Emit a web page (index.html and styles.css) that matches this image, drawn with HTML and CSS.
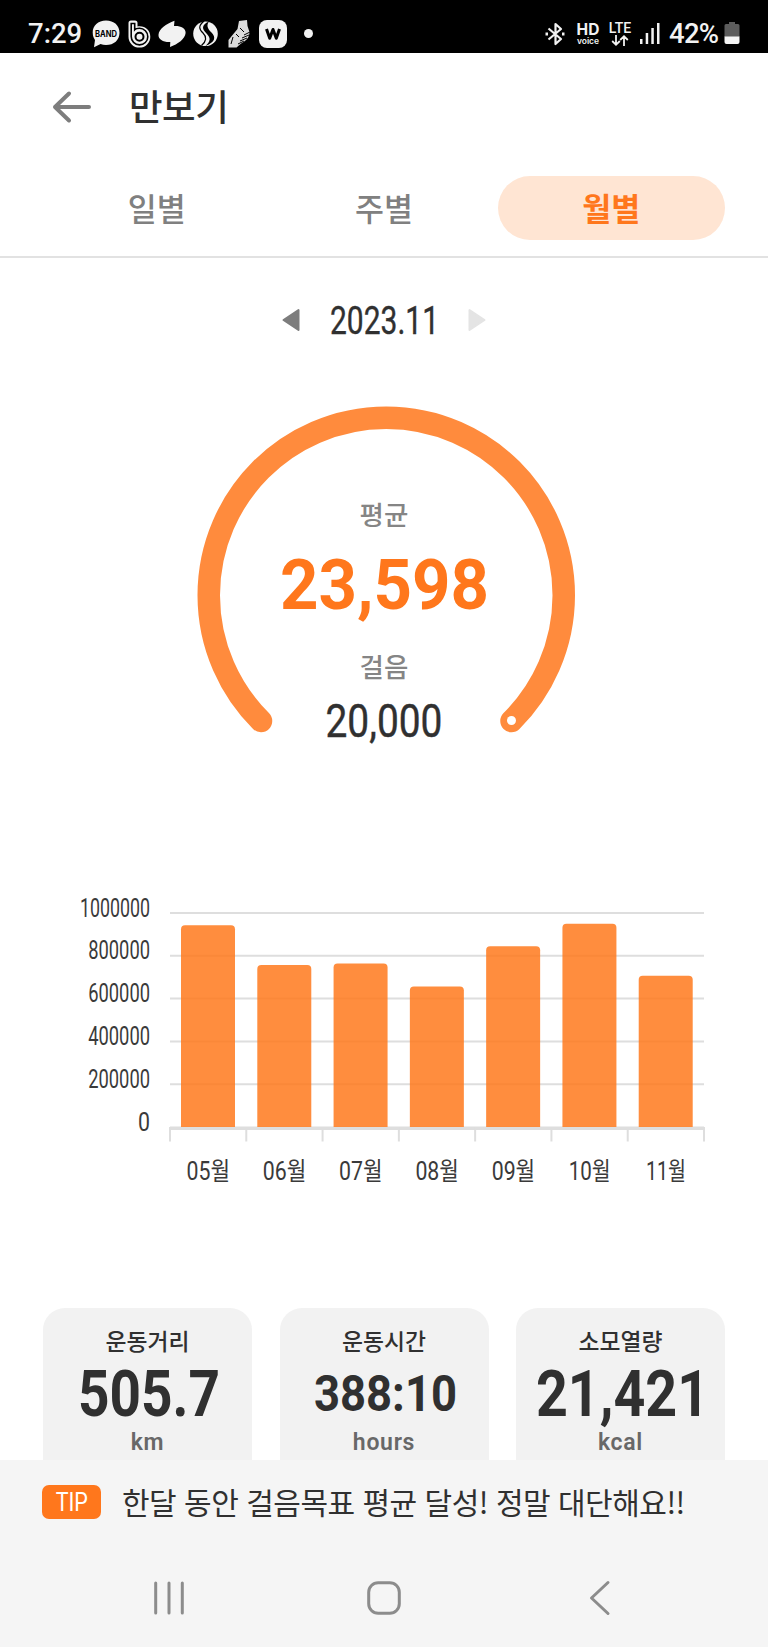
FILE: index.html
```html
<!DOCTYPE html>
<html lang="ko">

<head>
    <meta charset="UTF-8">
    <meta name="viewport" content="width=device-width, initial-scale=1.0">
    <title>만보기</title>
    <link rel="stylesheet" href="styles.css">
</head>

<body>

    <div class="status-bar">
        <div class="status-left">
            <span class="clock">7:29</span>
            <svg width="28" height="28" viewBox="0 0 28 28">
                <path d="M14 0.5C6 .5.7 5.500.7 12.500c0 4 1.500 6 2.300 7.500L2 27.300l6.500-3.300c1.800.700 3.500 1 5.500 1 8 0 13.500-5 13.500-12.300S22 .5 14 .5z" fill="#f2f2f2" />
                <text class="band-text" x="3" y="16.500" textLength="22" lengthAdjust="spacingAndGlyphs">BAND</text>
            </svg>
            <svg class="icon-b" width="23" height="28" viewBox="0 0 23 28" fill="none" stroke="#000" stroke-width="1.600">
                <path d="M.5 16.500V3A2.500 2.500 0 0 1 3 .5h4A2.500 2.500 0 0 1 9.500 3v3.500C17 5.500 22.300 10 22.300 16.700a10.900 10.900 0 0 1-21.800 0z" fill="#f2f2f2" stroke="none" />
                <path d="M3.200 3.500V16.500a8.300 8.300 0 1 0 8.300-8.200c-2 0-4 .4-4.800 1.300V3.500z" />
                <circle cx="11.500" cy="16.700" r="4" stroke-width="2" />
            </svg>
            <svg class="icon-leaf" width="28" height="28" viewBox="0 0 28 28">
                <path d="M16.500 .7L16 6C22 5.500 28 8 27.600 13 27 19 20 24 12 27L12.300 22C6 22.500 0 19.500.5 14.700 1 8.500 8 4 16.500 .7z" fill="#f2f2f2" />
            </svg>
            <svg class="icon-s" width="25" height="28" viewBox="0 0 25 28">
                <circle cx="12.500" cy="13.700" r="12.300" fill="#f2f2f2" />
                <path d="M16 1.500C8 5 9 9 13.500 13.500s4 8-1 12.500c10-4 10.500-9 6-13.500S13.500 5 16 1.500z" fill="#000" />
                <path d="M11 1c-6 5-5 8-1 12s3.500 8-1.500 12.500" fill="none" stroke="#000" stroke-width="1.200" />
            </svg>
            <svg class="icon-shoe" width="22" height="28" viewBox="0 0 22 28">
                <path d="M11 1l8-1 .5 6 2 6c0 6-4 9-9 12l-4 3.500H.5V20l4-5 5-6z" fill="#dcdcdc" />
                <path d="M12 8l4 4M8 14l3 3M5 17l-2 7M14 18l7-3M12 21l7-3M16 15l6-3M10 24l6-3" fill="none" stroke="#000" stroke-width="1" />
            </svg>
            <svg class="icon-w" width="28" height="28" viewBox="0 0 28 28">
                <rect width="28" height="28" rx="8" fill="#f2f2f2" />
                <path d="M7.500 9l3.200 9.300L14 9.500l3.300 8.800L20.500 9" fill="none" stroke="#000" stroke-width="3" stroke-linejoin="round" />
            </svg>
            <span class="dot"></span>
        </div>
        <div class="status-right">
            <svg width="20" height="24" viewBox="0 0 20 24" fill="none" stroke="#f2f2f2" stroke-width="2.200">
                <path d="M3.500 6.500L16 17l-5.500 5v-20L16 7 3.500 17.500" stroke-linejoin="round" />
                <path d="M.5 12h2.500M17 12h2.500" stroke-width="3.200" />
            </svg>
            <div class="hd"><span class="hd-top">HD</span><span class="hd-voice">voice</span></div>
            <div class="lte">
                <span>LTE</span>
                <svg width="18" height="11" viewBox="0 0 18 11" fill="none" stroke="#f2f2f2" stroke-width="1.800">
                    <path d="M5 0v9.500M1.200 6L5 9.800 8.800 6M13 11V1.500M9.200 5L13 1.200 16.800 5" />
                </svg>
            </div>
            <svg class="signal" width="20" height="22" viewBox="0 0 20 22" fill="#f2f2f2">
                <rect x="0" y="16" width="2.500" height="5" />
                <rect x="5.700" y="10" width="2.500" height="11" />
                <rect x="11.300" y="5" width="2.500" height="16" />
                <rect x="17" y="0" width="2.500" height="21" />
            </svg>
            <span class="percent">42%</span>
            <svg class="battery" width="16" height="23" viewBox="0 0 16 23">
                <path d="M5 0h6v2h3a1.500 1.500 0 0 1 1.500 1.500V15H.5V3.500A1.500 1.500 0 0 1 2 2h3z" fill="#5c5c5c" />
                <path d="M.5 14.500h15V20a2 2 0 0 1-2 2h-11a2 2 0 0 1-2-2z" fill="#f5f5f5" />
            </svg>
        </div>
    </div>

    <header class="header">
        <svg width="40" height="32" viewBox="0 0 40 32" fill="none" stroke="#7d7d7d" stroke-width="4" stroke-linecap="round" stroke-linejoin="round">
            <path d="M17 2.500L3 16l14 13.500M3 16h34" />
        </svg>
        <h1>만보기</h1>
    </header>

    <nav class="tabs">
        <a class="tab">일별</a>
        <a class="tab">주별</a>
        <a class="tab active">월별</a>
    </nav>

    <main>
        <div class="month">
            <svg width="18" height="24" viewBox="0 0 18 24"><path d="M16.500 2v20L1.500 12z" fill="#7d7d7d" stroke="#7d7d7d" stroke-width="2" stroke-linejoin="round" /></svg>
            <svg width="108" height="52"><text class="month-text" x="0" y="40" textLength="109" lengthAdjust="spacingAndGlyphs">2023.11</text></svg>
            <svg width="18" height="24" viewBox="0 0 18 24"><path d="M1.500 2v20l15-10z" fill="#e4e4e4" stroke="#e4e4e4" stroke-width="2" stroke-linejoin="round" /></svg>
        </div>

        <!-- Medidor de pasos -->
        <svg class="gauge" width="768" height="360" viewBox="0 400 768 360">
            <path d="M261 721A177.500 177.500 0 1 1 511.500 721" fill="none" stroke="#ff8b3d" stroke-width="22.500" stroke-linecap="round" />
            <circle cx="511.500" cy="720.500" r="4.500" fill="#fff" />
            <text class="gauge-label" x="384" y="525">평균</text>
            <text class="gauge-value" x="280" y="609" textLength="209" lengthAdjust="spacingAndGlyphs">23,598</text>
            <text class="gauge-label" x="384" y="677">걸음</text>
            <text class="gauge-goal" x="325.500" y="737" textLength="117" lengthAdjust="spacingAndGlyphs">20,000</text>
        </svg>

        <svg class="chart" id="chart" width="768" height="300" viewBox="0 890 768 300"></svg>

        <section class="cards">
            <div class="card">
                <span class="card-title">운동거리</span>
                <svg width="200" height="76"><text class="card-value" x="30" y="55" textLength="142" lengthAdjust="spacingAndGlyphs">505.7</text></svg>
                <span class="card-unit">km</span>
            </div>
            <div class="card">
                <span class="card-title">운동시간</span>
                <svg width="200" height="76"><text class="card-value small" x="30" y="50" textLength="143" lengthAdjust="spacingAndGlyphs">388:10</text></svg>
                <span class="card-unit">hours</span>
            </div>
            <div class="card">
                <span class="card-title">소모열량</span>
                <svg width="200" height="76"><text class="card-value" x="15" y="55" textLength="173" lengthAdjust="spacingAndGlyphs">21,421</text></svg>
                <span class="card-unit">kcal</span>
            </div>
        </section>
    </main>

    <footer class="footer">
        <div class="tip">
            <span class="tip-badge"><span>TIP</span></span>
            <span class="tip-text">한달 동안 걸음목표 평균 달성! 정말 대단해요!!</span>
        </div>
        <div class="nav-bar">
            <svg width="40" height="36" viewBox="0 0 40 36"><path d="M6.700 3v30M20 3v30M33.300 3v30" /></svg>
            <svg width="40" height="36" viewBox="0 0 40 36"><rect x="4.700" y="2.700" width="30.600" height="30.600" rx="9.500" /></svg>
            <svg width="40" height="36" viewBox="0 0 40 36"><path d="M29 2.500L12.500 18 29 33.500" /></svg>
        </div>
    </footer>

    <script>
        const data = [
            { month: "05월", value: 943000, width: 43.5 },
            { month: "06월", value: 757000, width: 43.5 },
            { month: "07월", value: 764000, width: 43.5 },
            { month: "08월", value: 657000, width: 43.5 },
            { month: "09월", value: 845000, width: 43.5 },
            { month: "10월", value: 950000, width: 42 },
            { month: "11월", value: 707000, width: 40 }
        ];

        const left = 170, right = 704, top0 = 913, base = 1127;
        const step = (right - left) / data.length;
        let out = "";

        for (let i = 0; i <= 5; i++) {
            const y = base - (base - top0) * i / 5;
            const label = String(i * 200000);
            const width = i === 0 ? 12 : label.length * 10.3 - (i === 5 ? 2 : 0);
            if (i > 0) out += `<path class="grid" d="M${left} ${y}H${right}"/>`;
            out += `<text class="axis-text" x="${150 - width}" y="${y + 3.5}" textLength="${width}" lengthAdjust="spacingAndGlyphs">${label}</text>`;
        }

        out += `<path class="axis" d="M${left} ${base + 1.2}H${right}"/>`;

        data.forEach((d, i) => {
            const x = left + step * i;
            const h = (base - top0) * d.value / 1000000;
            const y = base - h;
            out += `<path class="bar" d="M${x + 11} ${base}V${y + 4}q0 -4 4 -4h46q4 0 4 4V${base}z"/>`;
            out += `<text class="axis-text" x="${x + 38.3 - d.width / 2}" y="1180" textLength="${d.width}" lengthAdjust="spacingAndGlyphs">${d.month}</text>`;
        });

        for (let i = 0; i <= data.length; i++) {
            out += `<path class="grid" d="M${left + step * i} ${base}V1141.500"/>`;
        }

        document.getElementById("chart").innerHTML = out;
    </script>

</body>

</html>
```
FILE: styles.css
```css
/* Estilos generales */
body {
    margin: 0;
    width: 768px;
    height: 1647px;
    display: flex;
    flex-direction: column;
    overflow: hidden;
    background-color: #fff;
    color: #303030;
    font-family: "Noto Sans CJK KR", sans-serif;
}

svg {
    display: block;
    flex: none;
    overflow: visible;
}

/* Barra de estado */
.status-bar {
    height: 53px;
    box-sizing: border-box;
    padding: 14px 28px 0 28px;
    background-color: #000;
    color: #f2f2f2;
    display: flex;
    justify-content: space-between;
    font-family: Roboto, sans-serif;
    flex: none;
}

.status-left,
.status-right {
    display: flex;
    align-items: center;
    height: 39px;
}

.clock {
    width: 64px;
    font-size: 27.5px;
    font-weight: 500;
}

.band-text {
    font: 700 8.500px Inter, sans-serif;
    fill: #000;
}

.icon-b {
    margin-left: 8px;
}

.icon-leaf {
    margin-left: 7px;
}

.icon-s {
    margin-left: 7px;
}

.icon-shoe {
    margin-left: 10px;
}

.icon-w {
    margin-left: 9px;
}

.dot {
    width: 9px;
    height: 9px;
    margin-left: 17px;
    border-radius: 50%;
    background-color: #f2f2f2;
}

.hd {
    width: 24px;
    margin-left: 11px;
    display: flex;
    flex-direction: column;
    align-items: center;
    font-family: Inter, sans-serif;
}

.hd-top {
    font-size: 15.500px;
    line-height: 14px;
    font-weight: 700;
}

.hd-voice {
    font-size: 8.500px;
    line-height: 8px;
    font-weight: 600;
}

.lte {
    width: 24px;
    margin-left: 8px;
    display: flex;
    flex-direction: column;
    align-items: center;
    gap: 1px;
    font-size: 14px;
    line-height: 12px;
    font-weight: 500;
}

.signal {
    margin-left: 8px;
}

.percent {
    width: 50px;
    margin: 0 5px 0 9px;
    font-size: 27.5px;
    font-weight: 500;
    letter-spacing: -0.7px;
}

/* Cabecera */
.header {
    height: 105px;
    padding: 0 0 3px 52px;
    display: flex;
    align-items: center;
    gap: 37px;
    flex: none;
}

.header svg {
    margin-top: 2px;
}

.header h1 {
    margin: 0;
    font-size: 36.500px;
    font-weight: 500;
    letter-spacing: -0.500px;
}

.tabs {
    height: 64px;
    padding: 15px 43px 16px;
    border-bottom: 2px solid #e2e2e2;
    display: flex;
    flex: none;
}

.tab {
    flex: 1;
    border-radius: 32px;
    color: #808080;
    font-size: 31.500px;
    font-weight: 500;
    line-height: 62px;
    text-align: center;
}

.tab.active {
    background-color: #ffe5d3;
    color: #ff771c;
    font-weight: 700;
}

.month {
    height: 124px;
    display: flex;
    justify-content: center;
    align-items: center;
    gap: 30px;
}

.month-text {
    font: 400 39px Roboto, sans-serif;
    fill: #303030;
    stroke: #303030;
    stroke-width: 0.400;
}

.gauge {
    margin-top: 18px;
}

.gauge-label {
    font-size: 26.500px;
    font-weight: 500;
    fill: #858585;
    text-anchor: middle;
}

.gauge-value {
    font: 700 71px Roboto, sans-serif;
    fill: #ff771c;
}

.gauge-goal {
    font: 400 46px Roboto, sans-serif;
    fill: #303030;
    stroke: #303030;
    stroke-width: 0.400;
}

/* Grafico */
.chart {
    margin-top: 130px;
}

.grid {
    fill: none;
    stroke: #dedede;
    stroke-width: 2;
}

.axis {
    fill: none;
    stroke: #dedede;
    stroke-width: 3.500;
}

.bar {
    fill: #ff7719;
    fill-opacity: 0.84;
}

.axis-text {
    font: 400 25px Roboto, "Noto Sans CJK KR", sans-serif;
    fill: #3a3a3a;
}

.cards {
    margin-top: 118px;
    padding: 0 43px;
    display: flex;
    justify-content: space-between;
}

.card {
    width: 209px;
    height: 190px;
    padding-top: 19px;
    box-sizing: border-box;
    border-radius: 22px;
    background-color: #f2f2f2;
    display: flex;
    flex-direction: column;
    align-items: center;
}

.card-title {
    font-size: 22.800px;
    font-weight: 500;
    line-height: 28px;
    margin-bottom: 6px;
}

.card-value {
    font: 700 64px Roboto, sans-serif;
    fill: #303030;
}

.card-value.small {
    font-size: 50px;
}

.card-unit {
    margin-top: -8px;
    color: #686868;
    font-family: Roboto, sans-serif;
    font-size: 23px;
    font-weight: 600;
    line-height: 27px;
    letter-spacing: 0.700px;
}

main {
    height: 1202px;
    overflow: hidden;
    flex: none;
}

/* Barra inferior */
.footer {
    height: 187px;
    background-color: #f5f5f5;
    flex: none;
}

.tip {
    height: 84px;
    padding-left: 42px;
    display: flex;
    align-items: center;
    gap: 21px;
}

.tip-badge {
    width: 59px;
    height: 34px;
    border-radius: 7px;
    background-color: #ff771c;
    color: #fff;
    font-family: Roboto, sans-serif;
    font-size: 25px;
    line-height: 35px;
    text-align: center;
}

.tip-badge span {
    display: inline-block;
    transform: scaleX(0.86);
}

.tip-text {
    margin-bottom: 3px;
    font-size: 30px;
    line-height: 40px;
    letter-spacing: -0.500px;
    white-space: nowrap;
}

.nav-bar {
    padding: 36px 149px 0;
    display: flex;
    justify-content: space-between;
    fill: none;
    stroke: #8c8c8c;
    stroke-width: 3;
    stroke-linecap: round;
    stroke-linejoin: round;
}
```
